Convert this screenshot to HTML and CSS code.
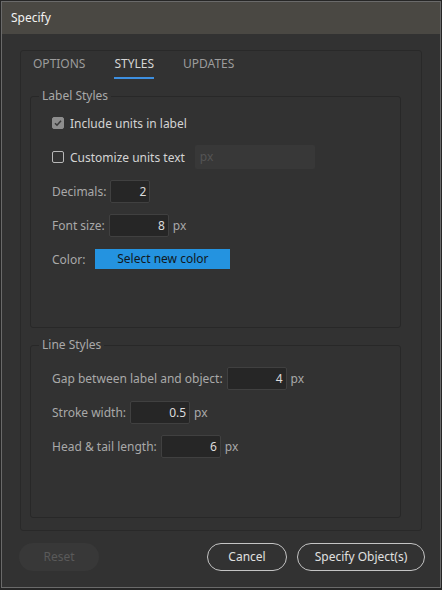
FILE: index.html
```html
<!DOCTYPE html>
<html>
<head>
<meta charset="utf-8">
<link rel="stylesheet" href="styles.css">
</head>
<body>
<div class="window">
  <div class="titlebar">Specify</div>
  <div class="content">
    <div class="panel">
      <div class="tabs">
        <span class="tab">OPTIONS</span>
        <span class="tab active">STYLES</span>
        <span class="tab">UPDATES</span>
      </div>
      <fieldset class="group group-label">
        <legend>Label Styles</legend>
        <div class="rows">
          <div class="row">
            <span class="check checked"><svg width="12" height="12" viewBox="0 0 12 12"><path d="M3 6.2 L5 8.2 L9 3.8" fill="none" stroke="#3a3a3a" stroke-width="1.6"/></svg></span>
            <span class="check-label">Include units in label</span>
          </div>
          <div class="row">
            <span class="check"></span>
            <span class="check-label">Customize units text</span>
            <span class="text-input disabled">px</span>
          </div>
          <div class="row">
            <span class="label">Decimals:</span>
            <span class="num-input small">2</span>
          </div>
          <div class="row">
            <span class="label">Font size:</span>
            <span class="num-input">8</span>
            <span class="unit">px</span>
          </div>
          <div class="row">
            <span class="label">Color:</span>
            <span class="color-btn">Select new color</span>
          </div>
        </div>
      </fieldset>
      <fieldset class="group group-line">
        <legend>Line Styles</legend>
        <div class="rows">
          <div class="row">
            <span class="label">Gap between label and object:</span>
            <span class="num-input">4</span>
            <span class="unit">px</span>
          </div>
          <div class="row">
            <span class="label">Stroke width:</span>
            <span class="num-input">0.5</span>
            <span class="unit">px</span>
          </div>
          <div class="row">
            <span class="label">Head &amp; tail length:</span>
            <span class="num-input">6</span>
            <span class="unit">px</span>
          </div>
        </div>
      </fieldset>
    </div>
    <div class="footer">
      <span class="btn reset">Reset</span>
      <span class="spacer"></span>
      <span class="btn outline">Cancel</span>
      <span class="btn outline wide">Specify Object(s)</span>
    </div>
  </div>
</div>
</body>
</html>
```
FILE: styles.css
```css
* { box-sizing: border-box; }
html, body { margin: 0; padding: 0; }
body {
  width: 442px;
  height: 590px;
  background: #262626;
  padding: 1px 1px 2px 1px;
  font-family: "Noto Sans", "Open Sans", sans-serif;
  font-size: 12px;
  overflow: hidden;
}
.window {
  height: 100%;
  border: 1px solid #6a6a6a;
  background: #323232;
  display: flex;
  flex-direction: column;
}
.titlebar {
  height: 32px;
  flex: none;
  background: #4a4843;
  color: #f2f2f2;
  padding-left: 9px;
  line-height: 32px;
  font-size: 12px;
}
.content {
  flex: 1;
  display: flex;
  flex-direction: column;
  padding: 16px 18px 0 18px;
}
.panel {
  height: 481px;
  border: 1px solid #292929;
  border-radius: 3px;
  padding: 0 20px 0 9px;
}
.tabs {
  display: flex;
  gap: 29px;
  padding-left: 3px;
  height: 33px;
  padding-top: 4px;
}
.tab {
  color: #9c9c9c;
  font-size: 12px;
  line-height: 18px;
  height: 24px;
  border-bottom: 2px solid transparent;
}
.tab.active {
  color: #d6d6d6;
  border-bottom-color: #3d8fe0;
}
.group {
  margin: 0;
  border: 1px solid #282828;
  border-radius: 3px;
  padding: 0 0 0 21px;
}
.group legend {
  color: #a9a9a9;
  font-size: 12px;
  padding: 0 3px;
  margin-left: -13px;
  line-height: 14px;
}
.group-label { height: 239px; margin-top: 5px; }
.group-line { height: 180px; margin-top: 10px; }
.rows {
  display: flex;
  flex-direction: column;
  gap: 10px;
  padding-top: 8px;
}
.group-line .rows { padding-top: 14px; }
.row {
  display: flex;
  align-items: center;
  height: 24px;
}
.check {
  width: 12px;
  height: 12px;
  border: 1px solid #b8b8b8;
  border-radius: 2px;
  margin-right: 6px;
  display: flex;
}
.check.checked {
  background: #8e8e8e;
  border-color: #8e8e8e;
}
.check svg { margin: -1px; }
.check-label { color: #d4d4d4; }
.text-input.disabled {
  margin-left: 10px;
  width: 120px;
  height: 24px;
  background: #383838;
  border-radius: 2px;
  color: #545454;
  padding-left: 5px;
  line-height: 24px;
}
.label { color: #a9a9a9; margin-right: 4px; }
.num-input {
  width: 60px;
  height: 23px;
  background: #262626;
  border: 1px solid #404040;
  border-radius: 2px;
  color: #dcdcdc;
  text-align: right;
  padding-right: 3px;
  line-height: 21px;
}
.num-input.small { width: 40px; }
.unit { color: #a9a9a9; margin-left: 4px; }
.color-btn {
  margin-left: 6px;
  width: 135px;
  height: 20px;
  background: #2493e0;
  color: #111820;
  text-align: center;
  line-height: 20px;
}
.footer {
  display: flex;
  gap: 10px;
  padding-top: 12px;
  margin-left: -1px;
  margin-right: -3px;
}
.spacer { flex: 1; }
.btn {
  height: 28px;
  border-radius: 14px;
  line-height: 26px;
  text-align: center;
  font-size: 12px;
  border: 1px solid transparent;
  width: 80px;
}
.btn.reset {
  background: #383838;
  color: #5a5a5a;
}
.btn.outline {
  border-color: #c4c4c4;
  color: #e0e0e0;
}
.btn.wide { width: 128px; }
```
